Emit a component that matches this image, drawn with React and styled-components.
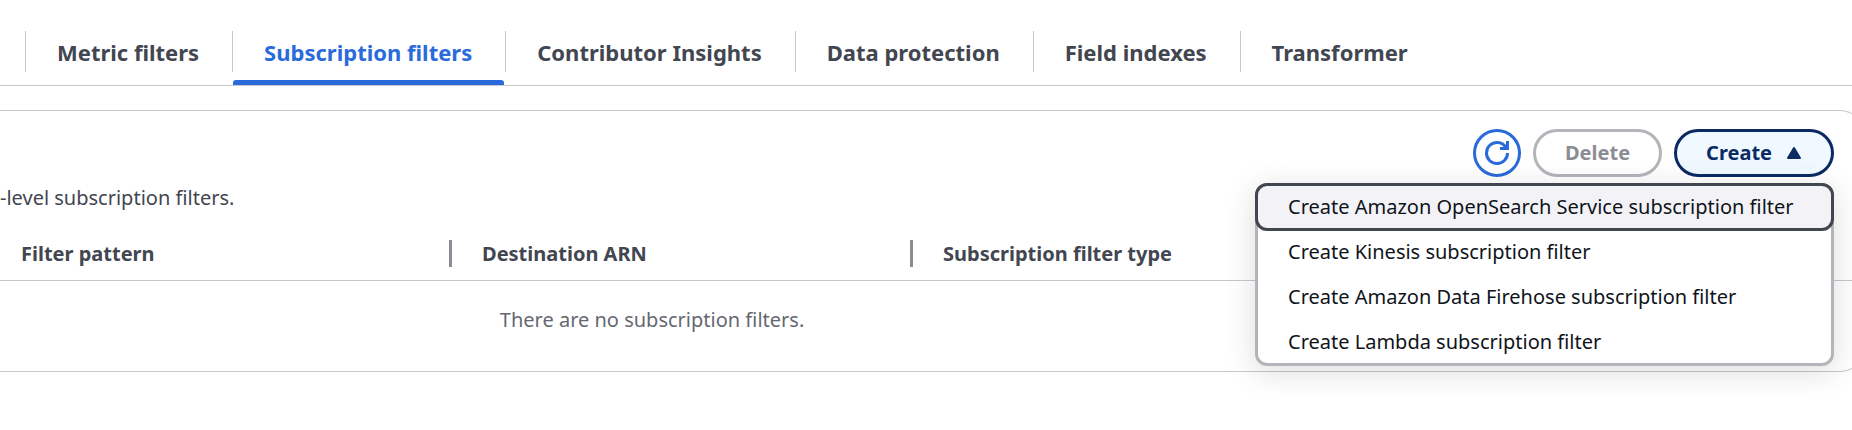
import React, { useState } from "react";
import styled, { createGlobalStyle, css } from "styled-components";

const GlobalStyle = createGlobalStyle`
  * {
    box-sizing: border-box;
  }
  body {
    margin: 0;
    background-color: #ffffff;
    color: #424650;
    font-family: "Noto Sans", "Open Sans", sans-serif;
    font-size: 20px;
    line-height: 30px;
  }
`;

const Page = styled.main`
  overflow: hidden;
  padding: 31px 0 58px;
`;
const TabList = styled.nav`
  display: flex;
  padding-left: 25px;
  border-bottom: 1px solid #c6c6cd;
`;
const Tab = styled.a`
  display: flex;
  flex-direction: column;
  gap: 8px;
  color: ${(props) => (props.$active ? "#2a6adb" : "#424650")};
  font-size: 22px;
  font-weight: 700;
  line-height: 39px;
  white-space: nowrap;
  text-decoration: none;
  &::after {
    content: "";
    height: 5px;
    margin: 0 1px;
    border-radius: 3px 3px 0 0;
    background-color: ${(props) => (props.$active ? "#2a6adb" : "transparent")};
  }
`;
const TabLabel = styled.span`
  padding: 2px 33px 0 31px;
  border-left: 1px solid #c6c6cd;
`;

const Panel = styled.section`
  margin: 24px -12px 0 0;
  border: solid #c6c6cd;
  border-width: 1px 1px 1px 0;
  border-radius: 0 24px 24px 0;
`;
const PanelHeader = styled.header`
  display: flex;
  flex-direction: column;
  gap: 6px;
  padding: 18px 29px 14px 0;
`;
const Actions = styled.div`
  display: flex;
  justify-content: flex-end;
  gap: 12px;
`;
const Description = styled.p`
  margin: 0;
`;

const Button = styled.button`
  display: flex;
  align-items: center;
  justify-content: center;
  gap: 14px;
  height: 48px;
  padding: 0 29px;
  border: 3px solid #2a6adb;
  border-radius: 30px;
  background-color: #ffffff;
  color: #2a6adb;
  font: inherit;
  font-weight: 700;
  cursor: pointer;
  &:disabled {
    border-color: #b4b4bb;
    color: #8c8c94;
    cursor: default;
  }
  ${(props) =>
    props.$open &&
    css`
      border-color: #0b2a63;
      background-color: #f0f9ff;
      color: #0b2a63;
    `}
`;
const IconButton = styled(Button)`
  width: 48px;
  padding: 0;
`;

const Dropdown = styled.div`
  position: relative;
`;
const Menu = styled.ul`
  position: absolute;
  top: 54px;
  right: 0;
  z-index: 2;
  min-width: 579px;
  margin: 0;
  padding: 0;
  list-style: none;
  border: 3px solid #b4b4bb;
  border-radius: 12px;
  background-color: #ffffff;
  box-shadow: 0 6px 30px 2px rgba(0, 7, 22, 0.12);
`;
const MenuItem = styled.li`
  margin: -3px;
`;
const MenuButton = styled.button`
  position: relative;
  display: block;
  width: 100%;
  height: 48px;
  padding: 0 30px;
  border: 3px solid transparent;
  border-radius: 12px;
  background-color: transparent;
  color: #0f141a;
  font: inherit;
  text-align: left;
  white-space: nowrap;
  cursor: pointer;
  ${(props) =>
    props.$highlighted &&
    css`
      border-color: #424650;
      background-color: #f3f3f7;
    `}
`;

const Table = styled.table`
  width: 100%;
  table-layout: fixed;
  border-collapse: separate;
  border-spacing: 0;
`;
const HeaderCell = styled.th`
  width: ${(props) => props.$width || "auto"};
  padding: 13px 0;
  border-bottom: 1px solid #c6c6cd;
  font-weight: 700;
  text-align: left;
`;
const HeaderLabel = styled.div`
  padding-left: ${(props) => (props.$first ? "21px" : "30px")};
  border-right: ${(props) => (props.$last ? "none" : "3px solid #8c8c94")};
  line-height: 27px;
`;
const EmptyCell = styled.td`
  padding: 24px 30% 36px 0;
  color: #656871;
  text-align: center;
`;

const tabs = [
  "Metric filters",
  "Subscription filters",
  "Contributor Insights",
  "Data protection",
  "Field indexes",
  "Transformer",
];

const columns = [
  { title: "Filter pattern", width: "452px" },
  { title: "Destination ARN", width: "461px" },
  { title: "Subscription filter type" },
];

const createOptions = [
  "Create Amazon OpenSearch Service subscription filter",
  "Create Kinesis subscription filter",
  "Create Amazon Data Firehose subscription filter",
  "Create Lambda subscription filter",
];

const RefreshIcon = () => (
  <svg width="24" height="24" viewBox="0 0 16 16" fill="none" stroke="currentColor" strokeWidth="2" aria-hidden="true">
    <path d="M10 5h5V0" />
    <path d="M15 8a6.957 6.957 0 0 1-7 7 6.957 6.957 0 0 1-7-7 6.957 6.957 0 0 1 7-7 6.87 6.87 0 0 1 6.3 4" />
  </svg>
);

const CaretIcon = ({ open }) => (
  <svg width="16" height="16" viewBox="0 0 16 16" fill="currentColor" stroke="currentColor" strokeWidth="2" strokeLinejoin="round" aria-hidden="true">
    <path d={open ? "M8 3l6 10H2z" : "M8 13L2 3h12z"} />
  </svg>
);

const App = () => {
  const [activeTab, setActiveTab] = useState("Subscription filters");
  const [open, setOpen] = useState(true);
  const [highlighted, setHighlighted] = useState(createOptions[0]);

  return (
    <Page>
      <GlobalStyle />
      <TabList>
        {tabs.map((tab) => (
          <Tab
            key={tab}
            href="#"
            $active={tab === activeTab}
            onClick={() => setActiveTab(tab)}
          >
            <TabLabel>{tab}</TabLabel>
          </Tab>
        ))}
      </TabList>
      <Panel>
        <PanelHeader>
          <Actions>
            <IconButton aria-label="Refresh">
              <RefreshIcon />
            </IconButton>
            <Button disabled>Delete</Button>
            <Dropdown>
              <Button $open={open} aria-expanded={open} onClick={() => setOpen(!open)}>
                Create
                <CaretIcon open={open} />
              </Button>
              {open && (
                <Menu>
                  {createOptions.map((option) => (
                    <MenuItem key={option}>
                      <MenuButton
                        $highlighted={option === highlighted}
                        onMouseEnter={() => setHighlighted(option)}
                      >
                        {option}
                      </MenuButton>
                    </MenuItem>
                  ))}
                </Menu>
              )}
            </Dropdown>
          </Actions>
          <Description>-level subscription filters.</Description>
        </PanelHeader>
        <Table>
          <thead>
            <tr>
              {columns.map((column, i) => (
                <HeaderCell key={column.title} $width={column.width}>
                  <HeaderLabel $first={i === 0} $last={i === columns.length - 1}>
                    {column.title}
                  </HeaderLabel>
                </HeaderCell>
              ))}
            </tr>
          </thead>
          <tbody>
            <tr>
              <EmptyCell colSpan={columns.length}>
                There are no subscription filters.
              </EmptyCell>
            </tr>
          </tbody>
        </Table>
      </Panel>
    </Page>
  );
};

export default App;
